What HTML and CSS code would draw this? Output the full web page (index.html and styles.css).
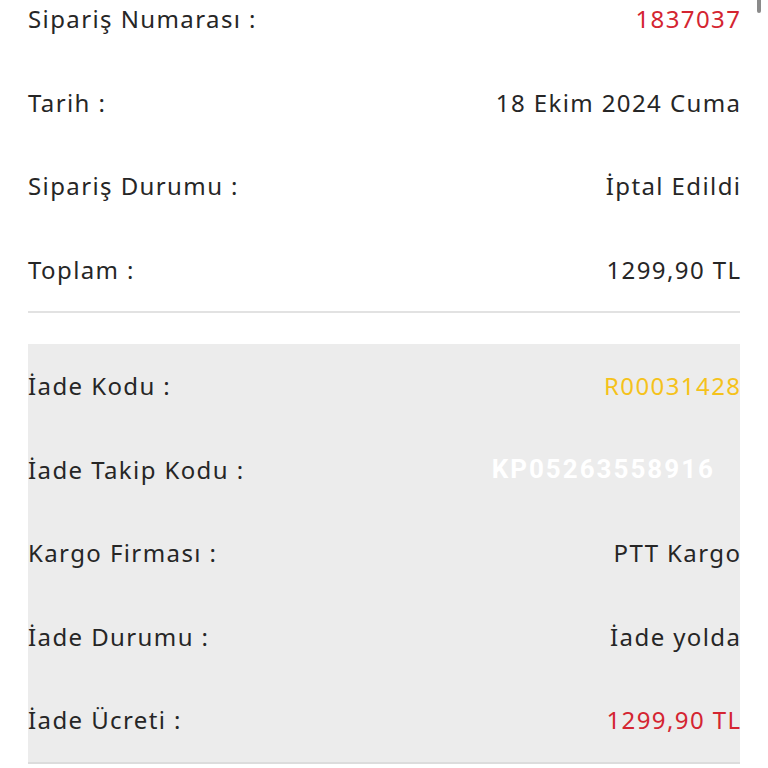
FILE: index.html
```html
<!DOCTYPE html>
<html lang="tr">
<head>
  <meta charset="UTF-8" />
  <title>Sipariş Detayı</title>
  <link rel="stylesheet" href="styles.css">
</head>
<body>

<div class="scrollbar"></div>

<div class="order">
  <div class="info">
    <div class="row">
      <span class="key">Sipariş Numarası :</span>
      <span class="val red">1837037</span>
    </div>
    <div class="row">
      <span class="key">Tarih :</span>
      <span class="val">18 Ekim 2024 Cuma</span>
    </div>
    <div class="row">
      <span class="key">Sipariş Durumu :</span>
      <span class="val">İptal Edildi</span>
    </div>
    <div class="row">
      <span class="key">Toplam :</span>
      <span class="val">1299,90 TL</span>
    </div>
  </div>

  <div class="refund">
    <div class="row">
      <span class="key">İade Kodu :</span>
      <span class="val yellow">R00031428</span>
    </div>
    <div class="row">
      <span class="key">İade Takip Kodu :</span>
      <span class="val tracking">KP05263558916</span>
    </div>
    <div class="row">
      <span class="key">Kargo Firması :</span>
      <span class="val">PTT Kargo</span>
    </div>
    <div class="row">
      <span class="key">İade Durumu :</span>
      <span class="val">İade yolda</span>
    </div>
    <div class="row">
      <span class="key">İade Ücreti :</span>
      <span class="val red">1299,90 TL</span>
    </div>
  </div>
</div>

</body>
</html>
```

FILE: styles.css
```css
body {
  margin: 0;
  font-family: "Noto Sans", sans-serif;
  color: #262626;
  background: #fff;
}
.scrollbar {
  position: absolute;
  top: -4px;
  right: 7px;
  width: 4px;
  height: 17px;
  border-radius: 2px;
  background: #8a8a8a;
}
.order {
  margin: -23px 28px 0;
}
.info {
  border-bottom: 2px solid #e2e2e2;
  margin-bottom: 31px;
}
.refund {
  background: #ececec;
  border-bottom: 2px solid #dcdcdc;
}
.row {
  display: flex;
  justify-content: space-between;
  align-items: center;
  height: 83.5px;
  font-size: 24px;
  letter-spacing: 1.4px;
}
.val {
  text-align: right;
  margin-right: -1.4px;
}
.red {
  color: #d42531;
}
.yellow {
  color: #f5c21b;
}
.tracking {
  color: #fff;
  font-family: Roboto, sans-serif;
  font-weight: 700;
  font-size: 26px;
  letter-spacing: 2px;
  margin-right: 0;
  padding-right: 25px;
}
```
